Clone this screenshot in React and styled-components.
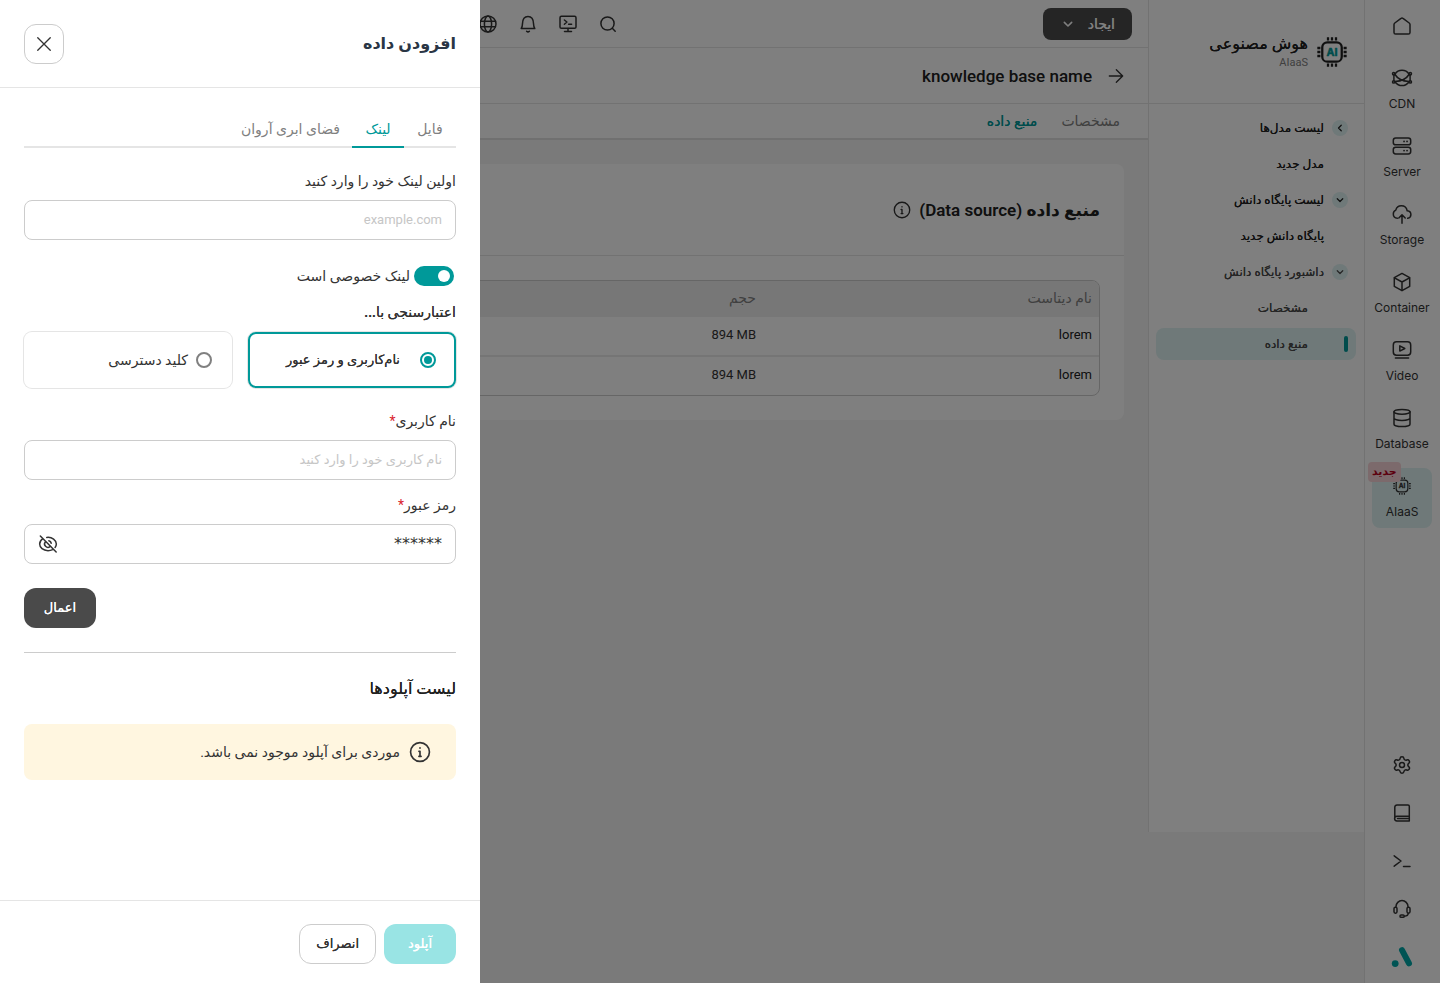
import React, { useState } from "react";
import styled, { createGlobalStyle, css } from "styled-components";
import { Settings } from "lucide-react";

const GlobalStyle = createGlobalStyle`
  :root {
    --color-primary: #009999;
    --color-text: #333333;
    --color-text-strong: #202020;
    --color-muted: #808080;
    --color-line: #e5e5e5;
    --color-border: #cccccc;
    --color-dark: #4a4a4a;
    --color-tint: #def2f2;
    --font-main: Roboto, "DejaVu Sans", sans-serif;
  }

  * {
    box-sizing: border-box;
  }

  body {
    margin: 0;
    color: var(--color-text);
    background-color: #f4f4f4;
    font-family: var(--font-main);
    font-size: 14px;
    line-height: 20px;
  }

  button,
  input {
    font: inherit;
    color: inherit;
  }

  h1,
  h2,
  p {
    margin: 0;
  }

  a {
    color: inherit;
    text-decoration: none;
  }
`;

// the arabic face has no medium cut, the shadow thickens the regular one
const medium = css`
  font-weight: 500;
  text-shadow: 0 0 0 currentColor;
`;

/* ---------- icons ---------- */

const Svg = styled.svg.attrs(({ viewBox }) => ({
  viewBox: viewBox || "0 0 24 24",
  "aria-hidden": true,
}))`
  display: block;
  flex: none;
  width: ${({ $size }) => $size || 24}px;
  height: ${({ $size }) => $size || 24}px;
  fill: none;
  stroke: currentColor;
  stroke-width: ${({ $weight }) => $weight || 1.5};
  stroke-linecap: round;
  stroke-linejoin: round;
`;

const HomeIcon = () => (
  <Svg>
    <path d="M4 10.600c0-.6.3-1.200.8-1.600l6.200-4.700a1.600 1.600 0 0 1 2 0l6.200 4.700c.5.4.8 1 .8 1.600v7.800a1.600 1.600 0 0 1-1.600 1.600H5.600A1.600 1.600 0 0 1 4 18.400z" />
  </Svg>
);

const CdnIcon = () => (
  <Svg>
    <path d="M5 8.200a8.300 8.300 0 0 1 14 0M5.300 16.200a8.300 8.300 0 0 0 13.400 0" />
    <path d="M3.900 8.800v5.700M20.100 8.800v5.700M5 8.500c3 5 8 6.600 13.900 7.100M19 8.500c-3 5-8 6.600-13.900 7.100" />
    <circle cx="3.700" cy="7.700" r="1.200" />
    <circle cx="20.300" cy="7.700" r="1.200" />
    <circle cx="3.700" cy="15.900" r="1.200" />
    <circle cx="20.300" cy="15.900" r="1.200" />
  </Svg>
);

const ServerIcon = () => (
  <Svg>
    <rect x="3.300" y="4" width="17.400" height="6.800" rx="2.400" />
    <rect x="3.300" y="13.200" width="17.400" height="6.800" rx="2.400" />
    <path d="M14 7.400h.1M17 7.400h.1M14 16.600h.1M17 16.600h.1" strokeWidth="1.700" />
  </Svg>
);

const StorageIcon = () => (
  <Svg>
    <path d="M7.400 16.200C4.700 16 3.300 14.100 3.300 12c0-1.800 1-3.200 2.500-3.900C6.500 5.400 8.700 3.800 11.300 3.800c3.100 0 5.400 2.100 5.900 5 2.100.2 3.700 1.800 3.700 3.800 0 1.900-1.300 3.400-3.200 3.700" />
    <path d="M12 21.200v-8M8.800 16l3.200-3.200 3.200 3.200" />
  </Svg>
);

const ContainerIcon = () => (
  <Svg>
    <path d="M12 3.400l7.700 4.300v8.600L12 20.600l-7.700-4.300V7.700z" />
    <path d="M4.500 7.900L12 12l7.500-4.100M12 12v8.400" />
  </Svg>
);

const VideoIcon = () => (
  <Svg>
    <rect x="3.300" y="3.800" width="17.400" height="13.400" rx="3.200" />
    <path d="M9.800 7.900v5.200l5-2.600zM5.400 19.900h13.200" />
  </Svg>
);

const DatabaseIcon = () => (
  <Svg>
    <ellipse cx="12" cy="5.800" rx="8" ry="2.400" />
    <path d="M4 5.800v12.400c0 1.300 3.600 2.400 8 2.400s8-1.100 8-2.400V5.800M4 12c0 1.300 3.600 2.400 8 2.400s8-1.100 8-2.400" />
  </Svg>
);

const ChipText = styled.text`
  fill: ${({ $color }) => $color || "currentColor"};
  stroke: ${({ $color }) => $color || "currentColor"};
  stroke-width: 0.4;
  font: 700 8px Inter, sans-serif;
  text-anchor: middle;
`;

const ChipIcon = ({ size, weight, color, viewBox }) => (
  <Svg $size={size} $weight={weight} viewBox={viewBox}>
    <rect x="4.700" y="4.700" width="14.600" height="14.600" rx="3.800" />
    <path
      strokeLinecap="butt"
      d="M9 1v2.300M12 1v2.300M15 1v2.300M9 20.700v2.300M12 20.700v2.300M15 20.700v2.300M1 9h2.300M1 12h2.300M1 15h2.300M20.700 9h2.300M20.700 12h2.300M20.700 15h2.300"
    />
    <ChipText x="12" y="14.900" $color={color}>
      AI
    </ChipText>
  </Svg>
);

const GearIcon = () => <Settings size={20} strokeWidth={1.8} />;

const BookIcon = () => (
  <Svg>
    <path d="M4.800 17.800V6.200A2.200 2.200 0 0 1 7 4h11a1.300 1.300 0 0 1 1.300 1.300V20H7a2.200 2.200 0 0 1 0-4.800h12.300M7.500 17.600h11.800" />
  </Svg>
);

const PromptIcon = () => (
  <Svg>
    <path d="M4.200 6.800L11 12l-6.800 5.200M13.500 17.500h6.500" />
  </Svg>
);

const HeadsetIcon = () => (
  <Svg>
    <rect x="4" y="10.200" width="3" height="6" rx="1.400" />
    <rect x="17" y="10.200" width="3" height="6" rx="1.400" />
    <path d="M6 10V9.600a6 6 0 0 1 12 0v.4M18.200 16.300c0 1.900-1.400 2.800-3.800 2.900" />
    <rect x="10" y="18" width="4.200" height="2.300" rx="1.100" />
  </Svg>
);

const BrandIcon = () => (
  <Svg>
    <path d="M12 5.200l7 13.200" stroke="#00a9a9" strokeWidth="6" />
    <circle cx="5.200" cy="18.600" r="3.400" fill="#00a9a9" stroke="none" />
  </Svg>
);

const GlobeIcon = () => (
  <Svg>
    <circle cx="12" cy="12" r="8" />
    <ellipse cx="12" cy="12" rx="3.600" ry="8" />
    <path d="M4.600 9.300h14.800M4.600 14.700h14.800" />
  </Svg>
);

const BellIcon = () => (
  <Svg>
    <path d="M5.200 16.600c1-1.200 1.200-2.600 1.300-5 .1-4.600 1.800-7.200 5.500-7.200s5.400 2.600 5.500 7.200c.1 2.400.3 3.800 1.300 5zM10.600 19.200c.8.800 2 .8 2.800 0" />
  </Svg>
);

const MonitorIcon = () => (
  <Svg>
    <rect x="4" y="4.300" width="16" height="12" rx="1.400" />
    <path d="M12 16.600v3M8.500 19.600h7M8.400 8l2.500 2-2.500 2.200M12.600 12.300h3" />
  </Svg>
);

const SearchIcon = () => (
  <Svg>
    <circle cx="11.500" cy="11.500" r="6.600" />
    <path d="M16.300 16.300l2.900 2.900" />
  </Svg>
);

const ChevronIcon = ({ open, size }) => (
  <Svg $size={size} $weight={2.4}>
    <path d={open ? "M6.500 9.500l5.500 5.500 5.500-5.500" : "M14.500 6.500L9 12l5.500 5.500"} />
  </Svg>
);

const ArrowIcon = () => (
  <Svg $size={16} $weight={2}>
    <path d="M2 12h20M12.500 2.500L22 12l-9.500 9.500" />
  </Svg>
);

const InfoIcon = ({ size }) => (
  <Svg $size={size} $weight={1.8}>
    <circle cx="12" cy="12" r="10.300" />
    <path d="M10.800 11.300H12v5.500M10.800 16.800h2.400M12 7.400v.5" />
  </Svg>
);

const CloseIcon = () => (
  <Svg $size={20} $weight={1.6}>
    <path d="M4.500 4.500l15 15M19.500 4.500l-15 15" />
  </Svg>
);

const EyeOffIcon = () => (
  <Svg $size={20} $weight={1.8}>
    <path d="M2.800 2.500l19 19M5.800 5.500C3.500 7 2 9.300 2 12c0 4.300 4.200 8 10 8 2.100 0 4-.5 5.600-1.300M10.500 4.100C17 3.300 22 7.500 22 12c0 1.500-.5 2.900-1.500 4.100" />
    <path d="M9 9.300a4 4 0 0 0 5.600 5.700M13 8.100a4 4 0 0 1 2.900 3" />
  </Svg>
);

/* ---------- page ---------- */

const Page = styled.div`
  display: flex;
  min-height: 100vh;
`;

const Rail = styled.nav`
  display: flex;
  flex-direction: column;
  flex: none;
  gap: 8px;
  width: 76px;
  padding: 0 8px 6px 7px;
  background-color: #ffffff;
  border-left: 1px solid var(--color-line);
  direction: ltr;
`;

const RailLink = styled.a`
  position: relative;
  display: flex;
  flex-direction: column;
  align-items: center;
  justify-content: ${({ $labelled }) => ($labelled ? "flex-start" : "center")};
  gap: 4px;
  height: ${({ $labelled }) => ($labelled ? 60 : 40)}px;
  padding-top: ${({ $labelled }) => ($labelled ? 6 : 0)}px;
  border-radius: 8px;
  background-color: ${({ $active }) =>
    $active ? "var(--color-tint)" : "transparent"};
  font-family: Inter, sans-serif;
  font-size: 12px;
`;

const RailHome = styled(RailLink)`
  height: 52px;
`;

const RailBottom = styled.div`
  display: flex;
  flex-direction: column;
  gap: 8px;
  margin-top: auto;
`;

const NewBadge = styled.span`
  position: absolute;
  top: -6px;
  left: -4px;
  padding: 0 4px;
  border-radius: 4px;
  color: #b8001c;
  background-color: #f9d5d8;
  font-family: var(--font-main);
  font-size: 11px;
  font-weight: 700;
  line-height: 20px;
`;

const Sidebar = styled.aside`
  flex: none;
  width: 216px;
  margin-bottom: 151px;
  background-color: #ffffff;
  border-left: 1px solid var(--color-line);
`;

const SidebarHeader = styled.header`
  display: flex;
  align-items: center;
  gap: 8px;
  height: 104px;
  padding: 0 16px;
  border-bottom: 1px solid var(--color-line);
  color: var(--color-text-strong);
`;

const SidebarTitle = styled.h2`
  ${medium}
  font-size: 16px;
  line-height: 22px;
`;

const SidebarSubtitle = styled.p`
  color: var(--color-muted);
  font-size: 11px;
  line-height: 16px;
`;

const SidebarNav = styled.nav`
  display: flex;
  flex-direction: column;
  gap: 4px;
  padding: 8px 8px 8px 7px;
`;

const SidebarLink = styled.a`
  ${medium}
  display: flex;
  align-items: center;
  gap: ${({ $nested }) => ($nested ? 24 : 8)}px;
  height: 32px;
  padding: 0 8px;
  border-radius: 8px;
  color: ${({ $strong }) =>
    $strong ? "var(--color-text-strong)" : "var(--color-dark)"};
  background-color: ${({ $active }) =>
    $active ? "var(--color-tint)" : "transparent"};
  font-size: 12px;
`;

const Marker = styled.span`
  display: flex;
  align-items: center;
  justify-content: center;
  flex: none;
  width: 16px;
  height: 16px;
  border-radius: 50%;
  background-color: ${({ $filled }) =>
    $filled ? "var(--color-tint)" : "transparent"};
`;

const ActiveBar = styled.span`
  width: 4px;
  height: 16px;
  margin-left: 12px;
  border-radius: 2px;
  background-color: var(--color-primary);
`;

const Main = styled.main`
  flex: 1;
  min-width: 0;
`;

const TopBar = styled.header`
  display: flex;
  align-items: center;
  justify-content: space-between;
  height: 48px;
  padding: 0 16px 0 476px;
  background-color: #ffffff;
  border-bottom: 1px solid var(--color-line);
`;

const CreateButton = styled.button`
  ${medium}
  display: flex;
  align-items: center;
  gap: 12px;
  height: 32px;
  padding: 0 17px;
  border: none;
  border-radius: 8px;
  color: #ffffff;
  background-color: var(--color-dark);
`;

const TopActions = styled.div`
  display: flex;
  gap: 16px;
`;

const IconButton = styled.button`
  display: flex;
  padding: 0;
  border: none;
  background: none;
`;

const TitleBar = styled.div`
  display: flex;
  align-items: center;
  gap: 16px;
  height: 56px;
  padding: 0 24px;
  background-color: #ffffff;
  border-bottom: 1px solid var(--color-line);
`;

const PageTitle = styled.h1`
  color: var(--color-text-strong);
  font-size: 17px;
  font-weight: 500;
  line-height: 24px;
`;

const PageTabs = styled.nav`
  display: flex;
  align-items: center;
  gap: 24px;
  height: 36px;
  padding: 0 28px;
  background-color: #ffffff;
  border-bottom: 2px solid #e0e0e0;
`;

const PageTab = styled.a`
  color: var(--color-muted);

  ${({ $active }) =>
    $active &&
    css`
      ${medium}
      color: var(--color-primary);
    `}
`;

const Card = styled.section`
  margin: 24px;
  border-radius: 8px;
  background-color: #ffffff;
`;

const CardHeader = styled.header`
  display: flex;
  align-items: center;
  gap: 8px;
  height: 92px;
  padding: 0 24px;
  border-bottom: 1px solid var(--color-line);
`;

const CardTitle = styled.h2`
  color: var(--color-text-strong);
  font-size: 17px;
  font-weight: 600;
  line-height: 24px;
`;

const CardBody = styled.div`
  padding: 24px;
`;

const TableFrame = styled.div`
  overflow: hidden;
  border: 1px solid var(--color-border);
  border-radius: 8px;
`;

const Table = styled.table`
  width: 100%;
  border-spacing: 0;
  table-layout: fixed;
  text-align: right;

  th {
    width: 32%;
    height: 36px;
    padding: 0 7px 2px;
    color: var(--color-muted);
    background-color: #efefef;
    font-weight: 400;
  }

  th:last-child {
    width: auto;
  }

  td {
    height: 38px;
    padding: 0 7px 2px;
    font-size: 13px;
  }

  tr:not(:last-child) td {
    height: 40px;
    border-bottom: 2px solid #ebebeb;
  }

  td:first-child {
    color: var(--color-text-strong);
  }
`;

const Backdrop = styled.div`
  position: fixed;
  inset: 0;
  background-color: rgba(0, 0, 0, 0.5);
`;

/* ---------- drawer ---------- */

const Drawer = styled.aside`
  position: fixed;
  top: 0;
  bottom: 0;
  left: 0;
  display: flex;
  flex-direction: column;
  width: 480px;
  max-width: 100%;
  background-color: #ffffff;
`;

const DrawerHeader = styled.header`
  display: flex;
  align-items: center;
  justify-content: space-between;
  padding: 24px 24px 23px;
  border-bottom: 1px solid var(--color-line);
`;

const DrawerTitle = styled.h2`
  color: #2a3645;
  font-size: 16px;
  font-weight: 700;
  line-height: 24px;
`;

const CloseButton = styled.button`
  display: flex;
  align-items: center;
  justify-content: center;
  width: 40px;
  height: 40px;
  padding: 0;
  border: 1px solid var(--color-border);
  border-radius: 12px;
  background: none;
`;

const DrawerBody = styled.div`
  flex: 1;
  overflow: auto;
  padding: 24px;
`;

const Tabs = styled.div`
  display: flex;
  height: 36px;
  margin-bottom: 24px;
  box-shadow: inset 0 -2px var(--color-line);
`;

const Tab = styled.button`
  min-width: 52px;
  padding: 0 12px;
  border: none;
  border-bottom: 2px solid transparent;
  background: none;
  color: var(--color-muted);

  ${({ $active }) =>
    $active &&
    css`
      color: var(--color-primary);
      border-color: var(--color-primary);
    `}
`;

const Form = styled.form`
  padding-bottom: 24px;
  border-bottom: 1px solid var(--color-border);
`;

const Field = styled.div`
  margin-bottom: ${({ $space }) => $space || 16}px;
`;

const Label = styled.label`
  display: block;
  margin-bottom: 10px;
  line-height: 18px;
`;

const Required = styled.span`
  color: #d9232e;
`;

const InputBox = styled.div`
  display: flex;
  align-items: center;
  height: 40px;
  padding: 0 13px;
  border: 1px solid var(--color-border);
  border-radius: 8px;
`;

const Input = styled.input`
  flex: 1;
  min-width: 0;
  padding: 0;
  border: none;
  outline: none;
  background: none;
  font-size: 13px;

  &::placeholder {
    color: #c6c6c6;
    opacity: 1;
  }
`;

const PasswordInput = styled(Input)`
  font-family: "DejaVu Sans", sans-serif;
  font-size: 16px;
`;

const SwitchRow = styled.div`
  display: flex;
  align-items: center;
  gap: 4px;
  margin-bottom: 16px;
  padding: 0 2px;
`;

const Switch = styled.input.attrs({ type: "checkbox", role: "switch" })`
  appearance: none;
  display: flex;
  align-items: center;
  width: 40px;
  height: 20px;
  margin: 0;
  padding: 0 4px;
  border-radius: 10px;
  background-color: var(--color-border);

  &::before {
    content: "";
    width: 12px;
    height: 12px;
    border-radius: 50%;
    background-color: #ffffff;
  }

  &:checked {
    background-color: var(--color-primary);
  }

  &:not(:checked) {
    justify-content: flex-end;
  }
`;

const AuthGroup = styled.fieldset`
  display: grid;
  grid-template-columns: 1fr 1fr;
  gap: 16px;
  margin: 0 0 24px;
  padding: 0;
  border: none;
`;

const AuthLegend = styled.legend`
  ${medium}
  margin-bottom: 10px;
  padding: 0;
`;

const AuthOption = styled.label`
  display: flex;
  align-items: center;
  gap: ${({ $checked }) => ($checked ? 20 : 8)}px;
  height: 56px;
  padding: 0 18px;
  border: 2px solid transparent;
  border-radius: 8px;
  box-shadow: 0 0 0 1px var(--color-line);

  ${({ $checked }) =>
    $checked &&
    css`
      ${medium}
      border-color: var(--color-primary);
      font-size: 13px;
    `}
`;

const Radio = styled.input.attrs({ type: "radio" })`
  appearance: none;
  flex: none;
  width: 16px;
  height: 16px;
  margin: 0;
  border: 2px solid var(--color-muted);
  border-radius: 50%;

  &:checked {
    border-color: var(--color-primary);
    background: var(--color-primary) content-box;
    padding: 2px;
  }
`;

const Button = styled.button`
  ${medium}
  min-width: 72px;
  height: 40px;
  padding: 0 16px;
  border: none;
  border-radius: 12px;
  font-size: 13px;

  ${({ $variant }) =>
    $variant === "dark" &&
    css`
      color: #ffffff;
      background-color: var(--color-dark);
    `}

  ${({ $variant }) =>
    $variant === "primary" &&
    css`
      color: #ffffff;
      background-color: #99e4e4;
    `}

  ${({ $variant }) =>
    $variant === "outline" &&
    css`
      border: 1px solid var(--color-border);
      background-color: #ffffff;
    `}
`;

const FormActions = styled.div`
  display: flex;
  justify-content: flex-end;
  padding-top: 8px;
`;

const UploadsTitle = styled.h2`
  ${medium}
  margin: 24px 0;
  color: var(--color-text-strong);
  font-size: 16px;
  line-height: 23px;
`;

const Notice = styled.div`
  display: flex;
  align-items: center;
  gap: 9px;
  height: 56px;
  padding: 0 25px;
  border-radius: 8px;
  background-color: #fff6e0;
`;

const DrawerFooter = styled.footer`
  display: flex;
  gap: 8px;
  padding: 23px 24px 19px;
  border-top: 1px solid var(--color-line);
`;

const railItems = [
  { label: "CDN", Icon: CdnIcon },
  { label: "Server", Icon: ServerIcon },
  { label: "Storage", Icon: StorageIcon },
  { label: "Container", Icon: ContainerIcon },
  { label: "Video", Icon: VideoIcon },
  { label: "Database", Icon: DatabaseIcon },
];

const railTools = [
  { name: "settings", Icon: GearIcon },
  { name: "docs", Icon: BookIcon },
  { name: "cli", Icon: PromptIcon },
  { name: "support", Icon: HeadsetIcon },
  { name: "brand", Icon: BrandIcon },
];

const sidebarItems = [
  { label: "لیست مدل‌ها", toggle: "closed", strong: true },
  { label: "مدل جدید", strong: true },
  { label: "لیست پایگاه دانش", toggle: "open", strong: true },
  { label: "پایگاه دانش جدید", strong: true },
  { label: "داشبورد پایگاه دانش", toggle: "open" },
  { label: "مشخصات", nested: true },
  { label: "منبع داده", nested: true, active: true },
];

const topActions = [
  { name: "search", Icon: SearchIcon },
  { name: "console", Icon: MonitorIcon },
  { name: "notifications", Icon: BellIcon },
  { name: "language", Icon: GlobeIcon },
];

const datasets = [
  { id: 1, name: "lorem", size: "894 MB" },
  { id: 2, name: "lorem", size: "894 MB" },
];

const authMethods = [
  { id: "password", label: "نام‌کاربری و رمز عبور" },
  { id: "key", label: "کلید دسترسی" },
];

const drawerTabs = ["فایل", "لینک", "فضای ابری آروان"];

const AddDataDrawer = () => {
  const [tab, setTab] = useState("لینک");
  const [isPrivate, setIsPrivate] = useState(true);
  const [method, setMethod] = useState("password");

  return (
    <Drawer>
      <DrawerHeader>
        <DrawerTitle>افزودن داده</DrawerTitle>
        <CloseButton aria-label="close">
          <CloseIcon />
        </CloseButton>
      </DrawerHeader>

      <DrawerBody>
        <Tabs role="tablist">
          {drawerTabs.map((name) => (
            <Tab
              key={name}
              role="tab"
              aria-selected={tab === name}
              $active={tab === name}
              onClick={() => setTab(name)}
            >
              {name}
            </Tab>
          ))}
        </Tabs>

        <Form onSubmit={(e) => e.preventDefault()}>
          <Field $space={26}>
            <Label htmlFor="link">اولین لینک خود را وارد کنید</Label>
            <InputBox>
              <Input id="link" placeholder="example.com" />
            </InputBox>
          </Field>

          <SwitchRow>
            <Switch
              id="private"
              checked={isPrivate}
              onChange={() => setIsPrivate(!isPrivate)}
            />
            <label htmlFor="private">لینک خصوصی است</label>
          </SwitchRow>

          <AuthGroup>
            <AuthLegend>اعتبارسنجی با...</AuthLegend>
            {authMethods.map(({ id, label }) => (
              <AuthOption key={id} $checked={method === id}>
                <Radio
                  name="auth"
                  checked={method === id}
                  onChange={() => setMethod(id)}
                />
                {label}
              </AuthOption>
            ))}
          </AuthGroup>

          <Field>
            <Label htmlFor="username">
              نام کاربری<Required>*</Required>
            </Label>
            <InputBox>
              <Input id="username" placeholder="نام کاربری خود را وارد کنید" />
            </InputBox>
          </Field>

          <Field>
            <Label htmlFor="password">
              رمز عبور<Required>*</Required>
            </Label>
            <InputBox>
              <PasswordInput id="password" defaultValue="******" />
              <IconButton type="button" aria-label="show password">
                <EyeOffIcon />
              </IconButton>
            </InputBox>
          </Field>

          <FormActions>
            <Button $variant="dark">اعمال</Button>
          </FormActions>
        </Form>

        <UploadsTitle>لیست آپلودها</UploadsTitle>
        <Notice>
          <InfoIcon size={22} />
          <p>موردی برای آپلود موجود نمی باشد.</p>
        </Notice>
      </DrawerBody>

      <DrawerFooter>
        <Button $variant="primary">آپلود</Button>
        <Button $variant="outline">انصراف</Button>
      </DrawerFooter>
    </Drawer>
  );
};

const App = () => {
  return (
    <>
      <GlobalStyle />
      <div dir="rtl" lang="fa">
        <Page>
          <Rail>
            <RailHome href="#" aria-label="home">
              <HomeIcon />
            </RailHome>
            {railItems.map(({ label, Icon }) => (
              <RailLink key={label} href="#" $labelled>
                <Icon />
                {label}
              </RailLink>
            ))}
            <RailLink href="#" $labelled $active>
              <ChipIcon size={24} viewBox="-3 -3 30 30" />
              AIaaS
              <NewBadge>جدید</NewBadge>
            </RailLink>
            <RailBottom>
              {railTools.map(({ name, Icon }) => (
                <RailLink key={name} href="#" aria-label={name}>
                  <Icon />
                </RailLink>
              ))}
            </RailBottom>
          </Rail>

          <Sidebar>
            <SidebarHeader>
              <ChipIcon size={32} weight={1.7} color="var(--color-primary)" />
              <div>
                <SidebarTitle>هوش مصنوعی</SidebarTitle>
                <SidebarSubtitle>AIaaS</SidebarSubtitle>
              </div>
            </SidebarHeader>
            <SidebarNav>
              {sidebarItems.map(({ label, toggle, strong, nested, active }) => (
                <SidebarLink
                  key={label}
                  href="#"
                  $strong={strong}
                  $nested={nested}
                  $active={active}
                >
                  {active ? (
                    <ActiveBar />
                  ) : (
                    <Marker $filled={toggle}>
                      {toggle && (
                        <ChevronIcon size={12} open={toggle === "open"} />
                      )}
                    </Marker>
                  )}
                  {label}
                </SidebarLink>
              ))}
            </SidebarNav>
          </Sidebar>

          <Main>
            <TopBar>
              <CreateButton>
                ایجاد
                <ChevronIcon size={16} open />
              </CreateButton>
              <TopActions>
                {topActions.map(({ name, Icon }) => (
                  <IconButton key={name} aria-label={name}>
                    <Icon />
                  </IconButton>
                ))}
              </TopActions>
            </TopBar>
            <TitleBar>
              <ArrowIcon />
              <PageTitle>knowledge base name</PageTitle>
            </TitleBar>
            <PageTabs>
              <PageTab href="#">مشخصات</PageTab>
              <PageTab href="#" $active>
                منبع داده
              </PageTab>
            </PageTabs>
            <Card>
              <CardHeader>
                <CardTitle>منبع داده (Data source)</CardTitle>
                <InfoIcon size={18} />
              </CardHeader>
              <CardBody>
                <TableFrame>
                  <Table>
                    <thead>
                      <tr>
                        <th>نام دیتاست</th>
                        <th>حجم</th>
                        <th />
                      </tr>
                    </thead>
                    <tbody>
                      {datasets.map(({ id, name, size }) => (
                        <tr key={id}>
                          <td>{name}</td>
                          <td>
                            <bdi>{size}</bdi>
                          </td>
                          <td />
                        </tr>
                      ))}
                    </tbody>
                  </Table>
                </TableFrame>
              </CardBody>
            </Card>
          </Main>
        </Page>
        <Backdrop />
        <AddDataDrawer />
      </div>
    </>
  );
};

export default App;
